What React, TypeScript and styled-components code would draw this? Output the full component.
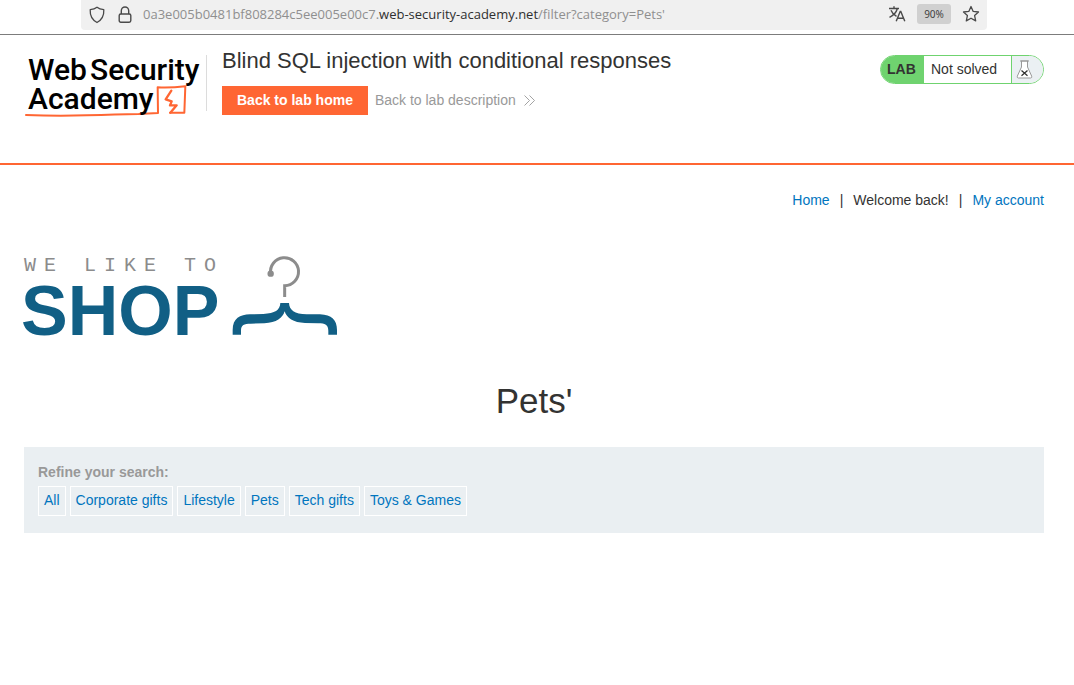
import React from "react";
import styled, { createGlobalStyle } from "styled-components";

const GlobalStyle = createGlobalStyle`
  *, *::before, *::after { box-sizing: border-box; }
  body {
    margin: 0;
    background: #fff;
    color: #333332;
    font-family: "Liberation Sans", Arial, sans-serif;
    font-size: 14px;
    line-height: 20px;
  }
`;

const BrowserBar = styled.div`
  height: 35px;
  padding: 0 87px 0 81px;
  border-bottom: 1px solid #7c7c7c;
`;

const AddressBar = styled.div`
  display: flex;
  align-items: center;
  height: 30px;
  padding: 0 6px;
  border-radius: 0 0 4px 4px;
  background: #f0f0f0;
`;

const BarButton = styled.button`
  display: flex;
  align-items: center;
  justify-content: center;
  flex: none;
  width: 20px;
  height: 20px;
  margin-right: 8px;
  padding: 0 0 1px;
  border: 0;
  background: none;
  color: #4a4a4a;
`;

const Address = styled.div`
  flex: 1;
  min-width: 0;
  padding-bottom: 2px;
  overflow: hidden;
  white-space: nowrap;
  font-family: "Open Sans", "Noto Sans", sans-serif;
  font-size: 13px;
  color: #8f8f8f;

  strong {
    font-weight: 400;
    color: #2f2f2f;
  }
`;

const BarActions = styled.div`
  display: flex;
  align-items: center;
  gap: 10px;
  padding-bottom: 2px;

  ${BarButton} { margin: 0; }
`;

const ZoomButton = styled.button`
  width: 34px;
  height: 20px;
  padding: 0;
  border: 0;
  border-radius: 3px;
  background: #d0d0d0;
  color: #3f3f3f;
  font-family: "Noto Sans", sans-serif;
  font-size: 10px;
`;

const Header = styled.header`
  display: flex;
  align-items: flex-start;
  height: 130px;
  padding: 12px 30px 0 24px;
  border-bottom: 2px solid #ff6633;
`;

const AcademyLogo = styled.a`
  flex: none;
  height: 72px;
  color: #000;

  svg { display: block; }
`;

const HeaderText = styled.div`
  flex: 1;
  min-width: 0;
  height: 56px;
  margin-top: 8px;
  padding-left: 15px;
  border-left: 1px solid #dcdcdc;
`;

const LabTitle = styled.h2`
  margin: -8px 0 12px;
  font-size: 22px;
  line-height: 27px;
  font-weight: 400;
`;

const LabLinks = styled.div`
  display: flex;
  align-items: center;
  gap: 7px;
  line-height: 29px;
`;

const HomeButton = styled.a`
  padding: 0 15px;
  background: #ff6633;
  color: #fff;
  font-weight: 700;
  text-decoration: none;
`;

const DescriptionLink = styled.a`
  display: flex;
  align-items: center;
  gap: 8px;
  color: #999;
  text-decoration: none;
`;

const LabStatus = styled.div`
  display: flex;
  flex: none;
  height: 29px;
  margin-top: 8px;
  overflow: hidden;
  border: 1px solid #6fd36f;
  border-radius: 15px;
  line-height: 27px;
`;

const StatusTag = styled.span`
  width: 43px;
  padding-left: 6px;
  background: #6fd36f;
  font-weight: 700;
`;

const StatusText = styled.span`
  width: 87px;
  padding-left: 7px;
`;

const StatusIcon = styled.span`
  display: flex;
  align-items: center;
  width: 32px;
  padding-left: 4px;
  border-left: 1px solid #6fd36f;
  background: #ebf0f3;
`;

const Main = styled.main`
  padding: 25px 30px 24px 24px;
`;

const AccountNav = styled.nav`
  display: flex;
  justify-content: flex-end;
  gap: 10px;
`;

const TextLink = styled.a`
  color: #0075be;
  text-decoration: none;
`;

const ShopLogo = styled.svg`
  display: block;
  margin-top: 40px;
  overflow: visible;
`;

const PageTitle = styled.h1`
  margin: 40px 0 25px;
  font-size: 35px;
  line-height: 42px;
  font-weight: 400;
  text-align: center;
`;

const Filters = styled.section`
  padding: 14px 14px 17px;
  background: #eaeff2;
`;

const FilterLabel = styled.p`
  margin: 0 0 3px;
  line-height: 22px;
  font-weight: 700;
  color: #999;
`;

const FilterList = styled.div`
  display: flex;
  flex-wrap: wrap;
  gap: 4px;
`;

const FilterLink = styled(TextLink)`
  padding: 0 5px 2px;
  border: 1px solid #fff;
  line-height: 26px;
`;

const categories = ["All", "Corporate gifts", "Lifestyle", "Pets", "Tech gifts", "Toys & Games"];

const ShieldIcon = () => (
  <svg width="16" height="18" viewBox="0 0 16 18" fill="none" stroke="currentColor" strokeWidth="1.3" strokeLinejoin="round">
    <path d="M8 1.2C6.2 2.7 3.5 3.5 1.2 3.7c-.3 5.4 1.8 10 6.8 12.8 5-2.8 7.1-7.4 6.8-12.8C12.5 3.5 9.8 2.7 8 1.2z" />
  </svg>
);

const LockIcon = () => (
  <svg width="14" height="18" viewBox="0 0 14 18" fill="none" stroke="currentColor" strokeWidth="1.4">
    <path d="M3.3 8V4.7a3.7 3.7 0 0 1 7.4 0V8" />
    <rect x="1.2" y="8" width="11.6" height="8.2" rx="1.6" />
  </svg>
);

const TranslateIcon = () => (
  <svg width="18" height="18" viewBox="0 0 18 18" fill="none" stroke="currentColor" strokeWidth="1.4">
    <path d="M1 3.5h10M6 1.3v2.2M9.3 3.7C8.3 7.3 5.5 10.3 1.5 12.3M3 5.2c1 2.6 3 4.7 5.5 6.2" />
    <path d="M8.2 16.3l4-9.8h.6l4 9.8M9.7 13.2h5.6" />
  </svg>
);

const StarIcon = () => (
  <svg width="18" height="18" viewBox="0 0 18 18" fill="none" stroke="currentColor" strokeWidth="1.3" strokeLinejoin="round">
    <path d="M9 1.5l2.2 4.9 5.3.6-3.9 3.6 1.1 5.3L9 13.2l-4.700 2.700 1.100-5.300L1.500 7l5.300-.6z" />
  </svg>
);

const ChevronsIcon = () => (
  <svg width="11" height="11" viewBox="0 0 11 11" fill="none" stroke="#999" strokeWidth=".9">
    <path d="M.5.5l5 5-5 5M5.5.5l5 5-5 5" />
  </svg>
);

const FlaskIcon = () => (
  <svg width="17" height="19" viewBox="0 0 17 19" fill="none">
    <path d="M5.5 1v6L1.3 16.2Q.8 18 2.5 18h12q1.7 0 1.2-1.8L11.5 7V1" fill="#fff" stroke="#999" />
    <path d="M4.3 1h8.4" stroke="#999" strokeWidth="1.4" />
    <path d="M5.5 10.500l6 5.200M11.500 10.500l-6 5.200" stroke="#333332" strokeWidth="1.3" />
  </svg>
);

export default function App() {
  return (
    <>
      <GlobalStyle />
      <BrowserBar>
        <AddressBar>
          <BarButton aria-label="Tracking protection"><ShieldIcon /></BarButton>
          <BarButton aria-label="Connection secure"><LockIcon /></BarButton>
          <Address>
            0a3e005b0481bf808284c5ee005e00c7.<strong>web-security-academy.net</strong>/filter?category=Pets'
          </Address>
          <BarActions>
            <BarButton aria-label="Translate page"><TranslateIcon /></BarButton>
            <ZoomButton>90%</ZoomButton>
            <BarButton aria-label="Bookmark page"><StarIcon /></BarButton>
          </BarActions>
        </AddressBar>
      </BrowserBar>

      <Header>
        <AcademyLogo href="#" aria-label="Web Security Academy">
          <svg width="182" height="72" viewBox="0 0 182 72">
            <g transform="scale(.33333) translate(-42 -21)" fill="none" stroke="#ff6633" strokeLinecap="round" strokeLinejoin="round">
              <path d="M48 225Q140 229 230 226T386 222L444 219 443 142Q480 144 526 139L523 218 480 218" strokeWidth="6" />
              <path d="M484 152L467 178 485 184 480 196 500 196 481 218" strokeWidth="7" />
            </g>
            <g fill="currentColor" fontFamily="Roboto, sans-serif" fontSize="30" fontWeight="500">
              <text x="4" y="33">Web</text>
              <text x="66" y="33">Security</text>
              <text x="4" y="62">Academy</text>
            </g>
          </svg>
        </AcademyLogo>
        <HeaderText>
          <LabTitle>Blind SQL injection with conditional responses</LabTitle>
          <LabLinks>
            <HomeButton href="#">Back to lab home</HomeButton>
            <DescriptionLink href="#">
              Back to lab description
              <ChevronsIcon />
            </DescriptionLink>
          </LabLinks>
        </HeaderText>
        <LabStatus>
          <StatusTag>LAB</StatusTag>
          <StatusText>Not solved</StatusText>
          <StatusIcon><FlaskIcon /></StatusIcon>
        </LabStatus>
      </Header>

      <Main>
        <AccountNav>
          <TextLink href="#">Home</TextLink>
          <span>|</span>
          <span>Welcome back!</span>
          <span>|</span>
          <TextLink href="#">My account</TextLink>
        </AccountNav>

        <ShopLogo width="316" height="90" viewBox="0 0 316 90" role="img" aria-label="We like to shop">
          <text x="0" y="21" fill="#8c8c8c" fontFamily="'Liberation Mono', monospace" fontSize="20" letterSpacing="8">WE LIKE TO</text>
          <text x="-3" y="85" fill="#115f85" fontFamily="'Liberation Sans', Arial, sans-serif" fontSize="70" fontWeight="700">SHOP</text>
          <g transform="scale(.33333) translate(-42 -30)">
            <path d="M782 101A42 42 0 1 1 824 137V171" fill="none" stroke="#8c8c8c" strokeWidth="9" />
            <circle cx="782" cy="101" r="9.5" fill="#8c8c8c" />
            <path
              fill="#115f85"
              d="M668 284V270C668 235 690 224 720 223L760 222C795 220 810 210 811 189H837C838 210 853 222 890 223H930C965 225 981 240 981 270V284H955V272C955 255 945 250 925 250L885 249C850 248 830 234 824 214C818 234 800 248 763 250L722 251C702 251 693 255 693 272V284Z"
            />
          </g>
        </ShopLogo>

        <PageTitle>Pets'</PageTitle>

        <Filters>
          <FilterLabel>Refine your search:</FilterLabel>
          <FilterList>
            {categories.map((name) => (
              <FilterLink key={name} href="#">{name}</FilterLink>
            ))}
          </FilterList>
        </Filters>
      </Main>
    </>
  );
}
